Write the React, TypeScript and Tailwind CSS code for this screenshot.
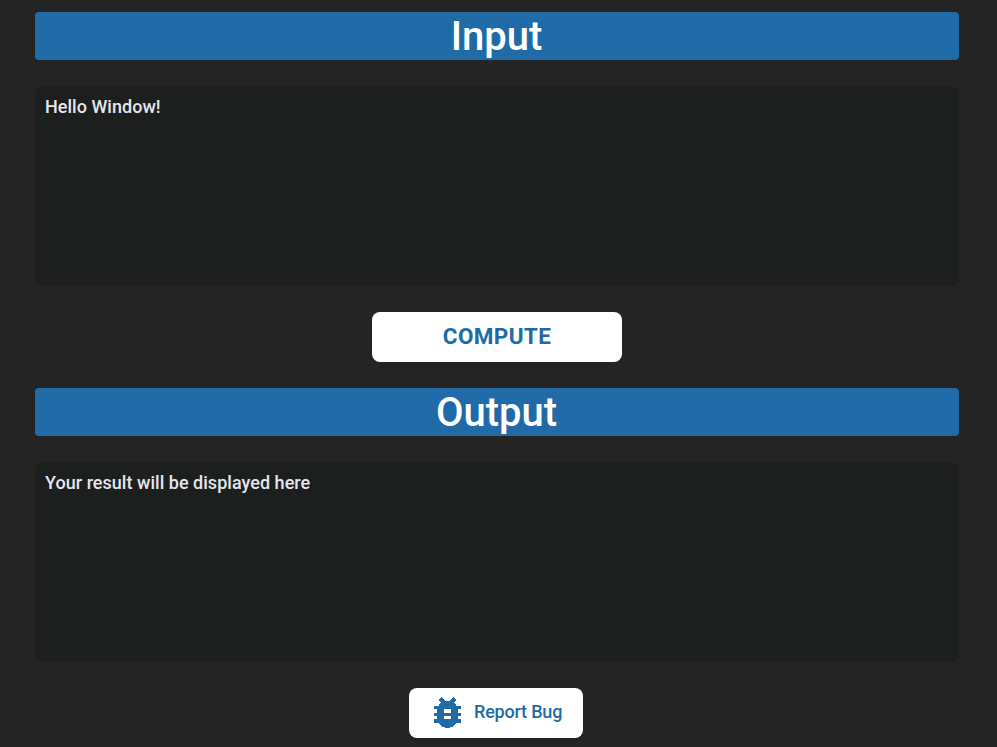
import React from "react";

function Heading({ children }: { children: React.ReactNode }) {
  return (
    <h1 className="h-12 rounded bg-[#206ba7] pt-px pr-px text-center text-[40px] leading-[48px] font-medium text-white">
      {children}
    </h1>
  );
}

function Panel({ children }: { children: React.ReactNode }) {
  return (
    <div className="h-[200px] rounded-lg bg-[#1d1f1e] p-2.5 text-[18px] leading-[21px] font-medium tracking-[0.03px] text-[#e4e6f0]">
      {children}
    </div>
  );
}

export default function App() {
  return (
    <main className="flex h-[747px] flex-col gap-[26px] overflow-hidden bg-[#242424] pt-3 pr-[38px] pl-[35px] font-[Roboto,sans-serif]">
      <Heading>Input</Heading>
      <Panel>Hello Window!</Panel>
      <button className="h-[50px] w-[250px] shrink-0 self-center rounded-lg bg-white text-[22.5px] leading-[26px] font-bold tracking-[0.35px] text-[#206ba7]">
        <span className="block pb-0.5">COMPUTE</span>
      </button>
      <Heading>Output</Heading>
      <Panel>Your result will be displayed here</Panel>
      <button className="mr-0.5 flex h-[50px] w-[174px] shrink-0 items-center self-center rounded-lg bg-white pl-[18px] text-[#206ba7]">
        <svg className="mr-[6px] mb-px size-[41px] shrink-0" viewBox="0 0 24 24" fill="currentColor" shapeRendering="crispEdges">
          <path d="M20 8h-2.810a5.985 5.985 0 0 0-1.820-1.960L17 4.410 15.590 3l-2.170 2.170a6.002 6.002 0 0 0-2.830 0L8.410 3 7 4.410l1.620 1.630C7.880 6.550 7.260 7.220 6.810 8H4v2h2.090c-.050.330-.090.660-.090 1v1H4v2h2v1c0 .340.040.670.090 1H4v2h2.810c1.040 1.790 2.970 3 5.190 3s4.150-1.210 5.190-3H20v-2h-2.090c.050-.330.090-.660.090-1v-1h2v-2h-2v-1c0-.340-.040-.670-.090-1H20V8zm-6 8h-4v-2h4v2zm0-4h-4v-2h4v2z" />
          <path d="M7.7 3.8 10 6.100M16.300 3.800 14 6.100" stroke="currentColor" strokeWidth="2.300" />
        </svg>
        <span className="pb-[3px] text-[18px] font-medium tracking-[-0.2px] whitespace-nowrap">Report Bug</span>
      </button>
    </main>
  );
}
